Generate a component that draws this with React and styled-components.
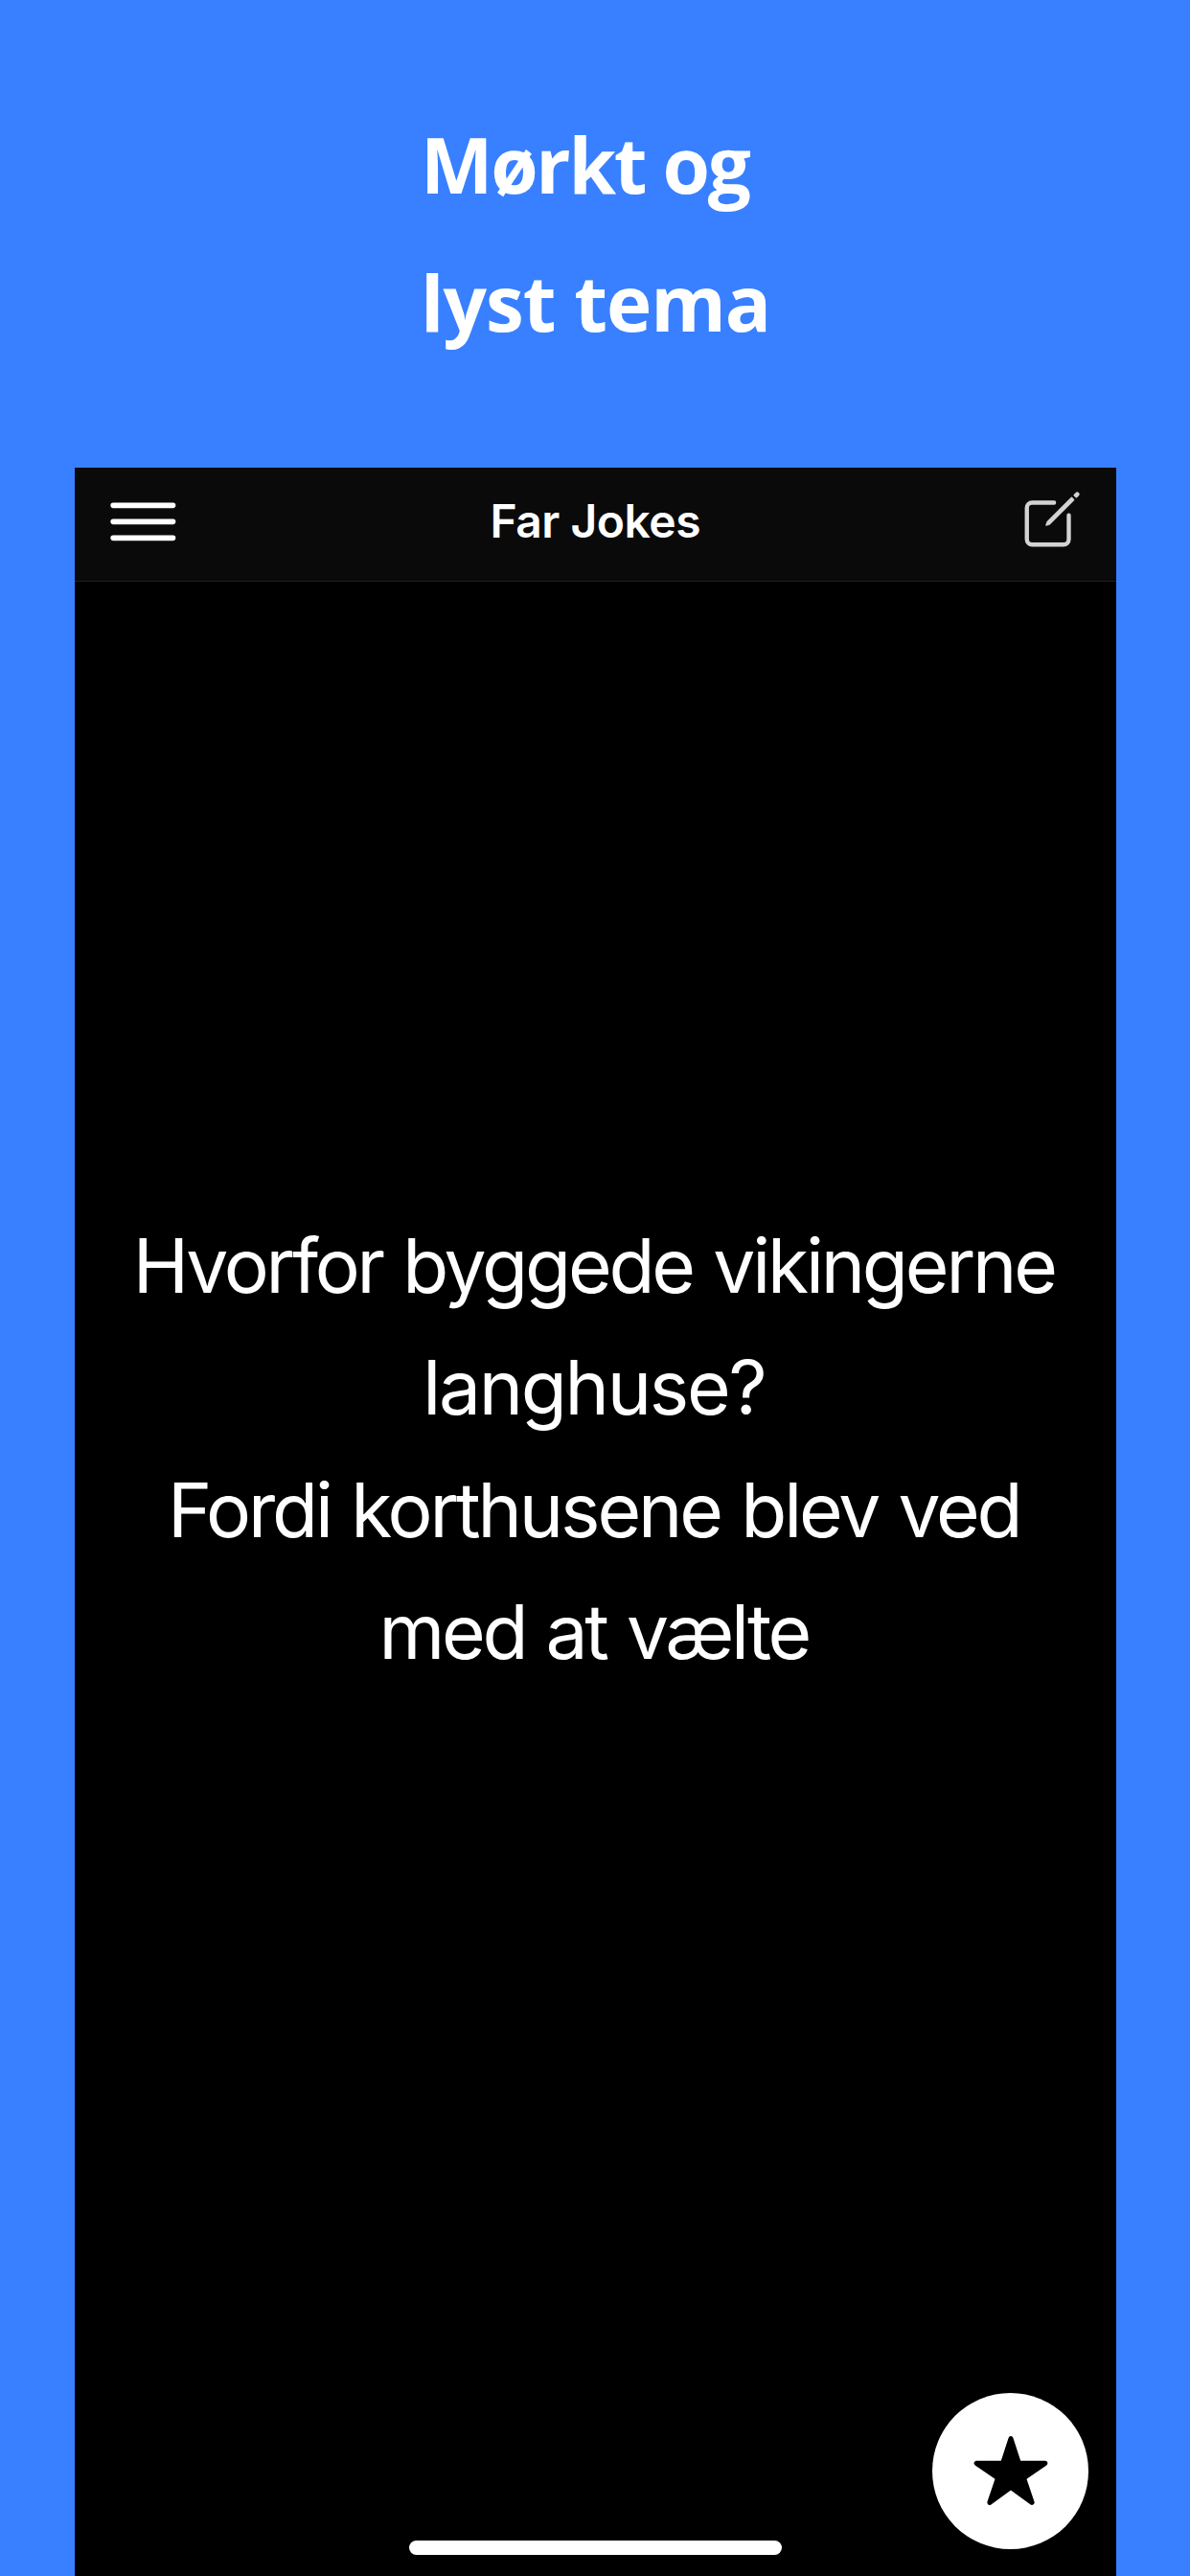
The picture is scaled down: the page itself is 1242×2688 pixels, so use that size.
import React from 'react';
import styled, { createGlobalStyle } from 'styled-components';

const GlobalStyle = createGlobalStyle`
  body {
    margin: 0;
    background: #3880ff;
  }
`;

const Poster = styled.div`
  box-sizing: border-box;
  display: flex;
  flex-direction: column;
  width: 1242px;
  height: 2688px;
  padding-left: 78px;
  overflow: hidden;
  background: #3880ff;
`;

const Caption = styled.h1`
  flex: none;
  box-sizing: border-box;
  display: flex;
  flex-direction: column;
  height: 488px;
  margin: 0;
  padding: 98.5px 0 0 361px;
  color: #fff;
  font-family: 'Open Sans', sans-serif;
  font-size: 80px;
  font-weight: 700;
  line-height: 144px;
`;

const Line = styled.span`
  display: block;
  white-space: nowrap;
  letter-spacing: ${({ $spacing = 0 }) => $spacing}px;
`;

const Phone = styled.div`
  position: relative;
  display: flex;
  flex-direction: column;
  flex: 1;
  width: 1086.5px;
  background: #000;
`;

const Toolbar = styled.header`
  flex: none;
  box-sizing: border-box;
  display: grid;
  grid-template-columns: 1fr auto 1fr;
  align-items: center;
  height: 119px;
  padding: 0 0 5px;
  background: #0a0a0a;
  border-bottom: 1px solid #1e1e1e;
`;

const Title = styled.h2`
  margin: 0;
  padding-bottom: 2px;
  color: #fff;
  font-family: Inter, sans-serif;
  font-size: 48px;
  font-weight: 600;
  line-height: 60px;
  letter-spacing: -0.5px;
  white-space: nowrap;
`;

const IconButton = styled.button`
  display: flex;
  padding: 0;
  border: none;
  background: none;
  color: ${({ $color }) => $color};
  cursor: pointer;
  svg {
    display: block;
    width: ${({ $size }) => $size}px;
    height: ${({ $size }) => $size}px;
  }
`;

const MenuButton = styled(IconButton)`
  margin-left: 25.6px;
`;

const CreateButton = styled(IconButton)`
  justify-self: end;
  margin: 0 31.6px 4.4px 0;
`;

const Joke = styled.main`
  padding: 649.75px 3px 0 0;
  color: #fff;
  font-family: Inter, sans-serif;
  font-size: 78.5px;
  line-height: 127.5px;
  text-align: center;
  word-spacing: 2.5px;
`;

const Fab = styled.button`
  position: absolute;
  right: 28.5px;
  bottom: 28.3px;
  display: flex;
  align-items: center;
  justify-content: center;
  width: 163px;
  height: 163px;
  padding: 0;
  border: none;
  border-radius: 50%;
  background: #fff;
  color: #000;
  cursor: pointer;
  svg {
    width: 82px;
    height: 82px;
  }
`;

const HomeIndicator = styled.div`
  width: 389px;
  height: 15px;
  margin: auto auto 22.5px 349px;
  border-radius: 8px;
  background: #fff;
`;

const MenuIcon = () => (
  <svg viewBox="0 0 512 512" fill="none" stroke="currentColor" strokeWidth="32" strokeLinecap="round">
    <path d="M80 160h352M80 256h352M80 352h352" />
  </svg>
);

const CreateIcon = () => (
  <svg viewBox="0 0 512 512" fill="currentColor">
    <path
      d="M384 224v184a40 40 0 0 1-40 40H104a40 40 0 0 1-40-40V168a40 40 0 0 1 40-40h167.48"
      fill="none"
      stroke="currentColor"
      strokeWidth="32"
      strokeLinecap="round"
      strokeLinejoin="round"
    />
    <path
      d="M459.94 53.25a16.06 16.06 0 0 0-23.22-.56L424.35 65a8 8 0 0 0 0 11.31l11.34 11.32a8 8 0 0 0 11.34 0l12.06-12c6.1-6.09 6.67-16.01.85-22.38zM399.34 90 218.82 270.2a9 9 0 0 0-2.31 3.93L208.16 299a3.91 3.91 0 0 0 4.86 4.86l24.85-8.35a9 9 0 0 0 3.93-2.31L422 112.66a9 9 0 0 0 0-12.66l-9.95-10a9 9 0 0 0-12.71 0z"
      stroke="currentColor"
      strokeWidth="3"
    />
  </svg>
);

const StarIcon = () => (
  <svg viewBox="0 0 512 512" fill="currentColor">
    <path d="M394 480a16 16 0 0 1-9.39-3L256 383.76 127.39 477a16 16 0 0 1-24.55-18.08L153 310.35 23 221.2a16 16 0 0 1 9-29.2h160.38l48.4-148.95a16 16 0 0 1 30.44 0l48.4 149H480a16 16 0 0 1 9.05 29.2L359 310.35l50.13 148.53A16 16 0 0 1 394 480z" />
  </svg>
);

const caption = [
  { text: 'Mørkt og', spacing: -2.3 },
  { text: 'lyst tema', spacing: -1 },
];

const joke = [
  { text: 'Hvorfor byggede vikingerne', spacing: -3.2 },
  { text: 'langhuse?', spacing: -2.3 },
  { text: 'Fordi korthusene blev ved', spacing: -3.15 },
  { text: 'med at vælte', spacing: -3.3 },
];

export default function App() {
  return (
    <Poster>
      <GlobalStyle />
      <Caption>
        {caption.map(({ text, spacing }) => (
          <Line key={text} $spacing={spacing}>
            {text}
          </Line>
        ))}
      </Caption>
      <Phone>
        <Toolbar>
          <MenuButton $size={90.7} $color="#fff" aria-label="Menu">
            <MenuIcon />
          </MenuButton>
          <Title>Far Jokes</Title>
          <CreateButton $size={70} $color="#d3d3d3" aria-label="Ny joke">
            <CreateIcon />
          </CreateButton>
        </Toolbar>
        <Joke>
          {joke.map(({ text, spacing }) => (
            <Line key={text} $spacing={spacing}>
              {text}
            </Line>
          ))}
        </Joke>
        <HomeIndicator />
        <Fab aria-label="Favorit">
          <StarIcon />
        </Fab>
      </Phone>
    </Poster>
  );
}
